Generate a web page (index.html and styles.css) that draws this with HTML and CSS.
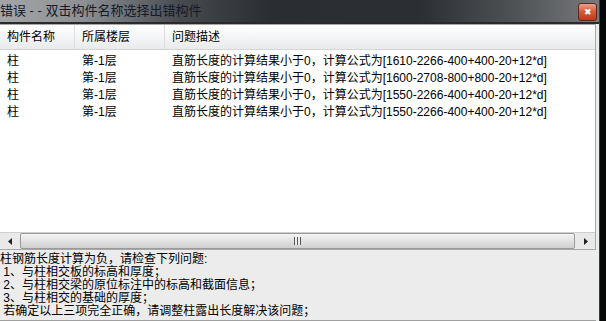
FILE: index.html
```html
<!DOCTYPE html>
<html lang="zh-CN">
<head>
  <meta charset="UTF-8">
  <title>错误</title>
  <link rel="stylesheet" href="styles.css">
</head>
<body>

<div class="window">
  <div class="titlebar">
    <span class="title">错误 - - 双击构件名称选择出错构件</span>
    <span class="close">&#x2716;</span>
  </div>

  <div class="client">
    <div class="list">
      <div class="row header">
        <div class="col c1">构件名称</div>
        <div class="col c2">所属楼层</div>
        <div class="col c3">问题描述</div>
      </div>
      <div class="rows">
        <div class="row"><div class="col c1">柱</div><div class="col c2">第-1层</div><div class="col c3">直筋长度的计算结果小于0，计算公式为[1610-2266-400+400-20+12*d]</div></div>
        <div class="row"><div class="col c1">柱</div><div class="col c2">第-1层</div><div class="col c3">直筋长度的计算结果小于0，计算公式为[1600-2708-800+800-20+12*d]</div></div>
        <div class="row"><div class="col c1">柱</div><div class="col c2">第-1层</div><div class="col c3">直筋长度的计算结果小于0，计算公式为[1550-2266-400+400-20+12*d]</div></div>
        <div class="row"><div class="col c1">柱</div><div class="col c2">第-1层</div><div class="col c3">直筋长度的计算结果小于0，计算公式为[1550-2266-400+400-20+12*d]</div></div>
      </div>
      <div class="hscroll">
        <div class="arrow">
          <svg width="5" height="7" viewBox="0 0 5 7"><path d="M4 0 L0 3.5 L4 7 Z" fill="#222"/></svg>
        </div>
        <div class="thumb"><span class="grip"></span></div>
        <div class="arrow">
          <svg width="5" height="7" viewBox="0 0 5 7"><path d="M1 0 L5 3.5 L1 7 Z" fill="#222"/></svg>
        </div>
      </div>
    </div>

    <div class="notes">
      <p>柱钢筋长度计算为负，请检查下列问题:</p>
      <p>&nbsp;1、与柱相交板的标高和厚度；</p>
      <p>&nbsp;2、与柱相交梁的原位标注中的标高和截面信息；</p>
      <p>&nbsp;3、与柱相交的基础的厚度；</p>
      <p>&nbsp;若确定以上三项完全正确，请调整柱露出长度解决该问题；</p>
    </div>
  </div>
</div>

</body>
</html>
```

FILE: styles.css
```css
body { margin: 0; background-color: #050807; font-family: "Liberation Sans", "Noto Sans CJK SC", sans-serif; font-size: 12px; color: #000; }
.window { width: 599px; height: 321px; display: flex; flex-direction: column; border-right: 1px solid #3a3a3a; background-color: #dcdcdc; }

.titlebar { height: 22px; display: flex; align-items: center; justify-content: space-between; padding-right: 2px;
  background: linear-gradient(to right, #a3a5a7 0, #8d9093 14%, #474b50 30%, #2a2e33 45%, #2b2f34 70%, #4d5053 85%, #77797b 100%); }
.title { font-size: 13px; color: #15192a; line-height: 22px; white-space: nowrap; }
.close { width: 17px; height: 16px; margin-top: 2px; border: 1px solid #5a2a20; border-radius: 3px; color: #fff; font-size: 9px; line-height: 16px; text-align: center;
  background: linear-gradient(#e9a088, #d35a38 50%, #c0381a 100%); }

.client { flex: 1; display: flex; flex-direction: column; border-top: 2px solid #2a2a2a; padding-right: 3px; background-color: #ececec; }

.list { height: 224px; display: flex; flex-direction: column; background-color: #fff; border: 1px solid #a8a8a8; border-left: none; }
.row { display: flex; height: 17px; line-height: 17px; white-space: nowrap; }
.col { padding-left: 7px; box-sizing: border-box; }
.c1 { width: 75px; }
.c2 { width: 90px; }
.c3 { flex: 1; }
.header { height: 24px; line-height: 24px; background: linear-gradient(#fff, #f4f5f6 50%, #e9eaec); border-bottom: 1px solid #d5d5d5; margin-bottom: 3px; }
.header .col { border-right: 1px solid #dcdcdc; }
.header .c3 { border-right: none; }
.rows { flex: 1; }

.hscroll { height: 16px; display: flex; gap: 1px; padding: 0 1px; background-color: #e9e9e9; border-top: 1px solid #cfcfcf; }
.arrow { width: 18px; display: flex; align-items: center; justify-content: center; }
.thumb { flex: 1; display: flex; align-items: center; justify-content: center; border: 1px solid #9a9a9a; border-radius: 2px;
  background: linear-gradient(#f4f4f4, #e2e2e2 50%, #cfcfcf); }
.grip { width: 7px; height: 8px; background: repeating-linear-gradient(to right, #555 0, #555 1px, #eee 1px, #eee 3px); }

.notes { flex: 1; padding-top: 3px; border-bottom: 1px solid #a0a0a0; }
.notes p { margin: 0; line-height: 13px; white-space: nowrap; }
```
